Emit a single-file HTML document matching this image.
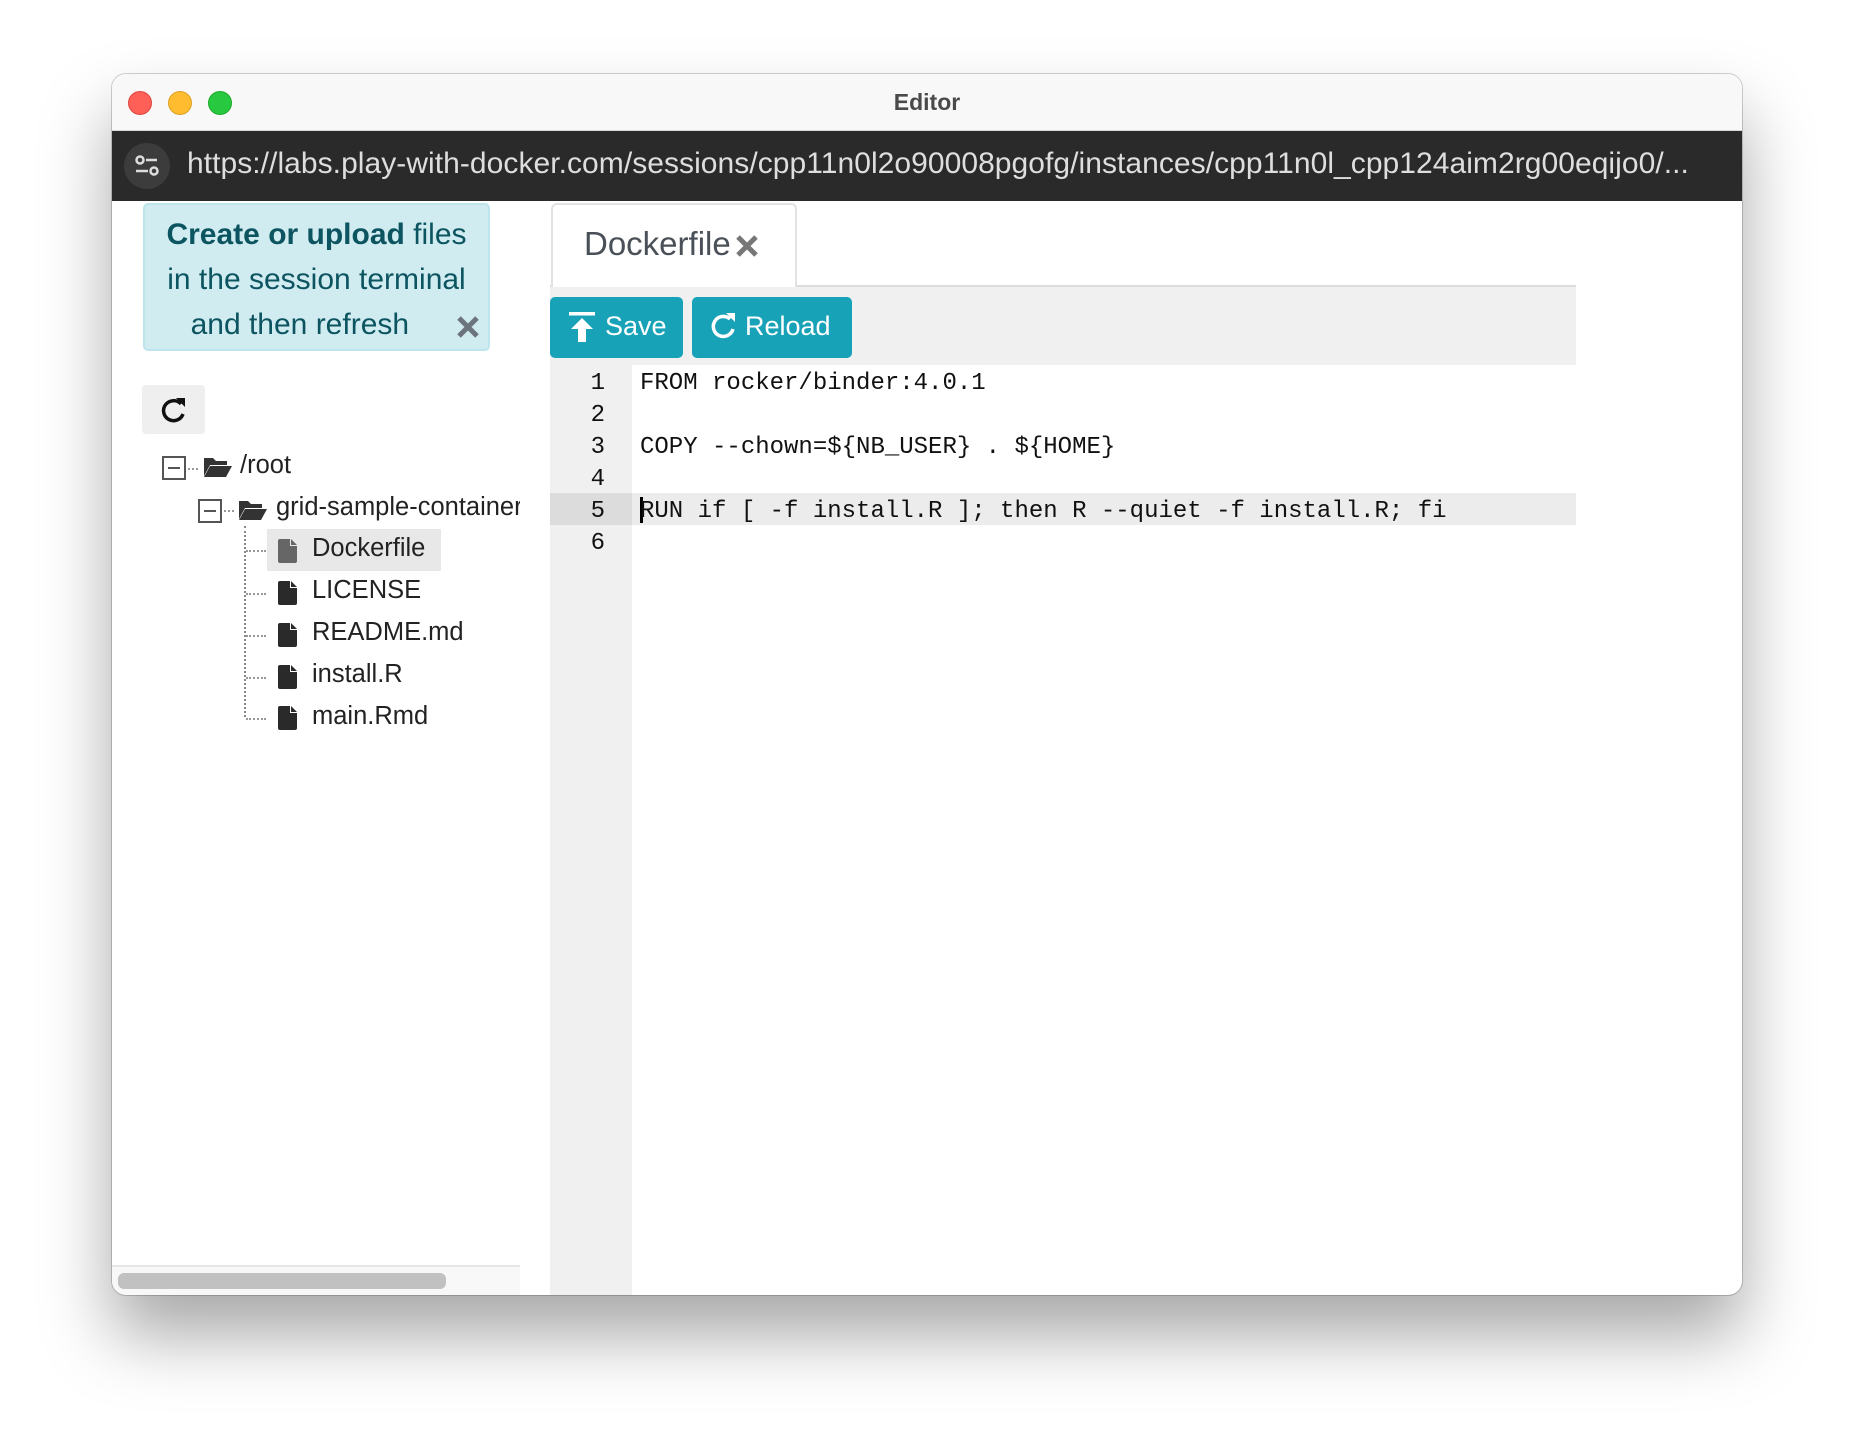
<!DOCTYPE html>
<html><head><meta charset="utf-8"><style>
*{box-sizing:border-box;margin:0;padding:0}
body{width:1854px;height:1444px;background:#fff;position:relative;overflow:hidden;font-family:"Liberation Sans",sans-serif}
.win{position:absolute;left:112px;top:74px;width:1630px;height:1221px;border-radius:14px;background:#fff;overflow:hidden;box-shadow:0 40px 70px rgba(0,0,0,.35),0 0 0 1px rgba(0,0,0,.18)}
.title{position:absolute;left:0;top:0;width:100%;height:57px;background:#f8f8f8;border-bottom:1px solid #d8d8d8}
.title .t{position:absolute;left:0;width:100%;top:15px;text-align:center;font-weight:bold;font-size:23px;color:#4a4a4a}
.dot{position:absolute;top:17px;width:24px;height:24px;border-radius:50%}
.addr{position:absolute;left:0;top:57px;width:100%;height:70px;background:#2a2a2a}
.addr .ic{position:absolute;left:12px;top:12px;width:46px;height:46px;border-radius:50%;background:#3c3c3c}
.addr .u{position:absolute;left:75px;top:16px;font-size:30px;color:#dedede;white-space:nowrap;letter-spacing:0.05px}
.abs{position:absolute}
.alert{left:31px;top:129px;width:347px;height:148px;background:#d1ecf1;border:2px solid #bee5eb;border-radius:5px;color:#0c5460;font-size:30px;line-height:45px;padding-top:7px;text-align:center;white-space:nowrap}
.tree{font-size:25.5px;color:#222}
.row{position:absolute;white-space:nowrap}
.mono{font-family:"Liberation Mono",monospace;font-size:24px;color:#111}
.btn{position:absolute;top:223px;height:61px;background:#17a2b8;border-radius:5px;color:#fff;font-size:27px}
</style></head><body>
<div class="win">
 <div class="title"><div class="t">Editor</div>
  <div class="dot" style="left:16px;background:#fe5f57;border:1px solid #e0443e"></div>
  <div class="dot" style="left:56px;background:#febc2e;border:1px solid #dea123"></div>
  <div class="dot" style="left:96px;background:#28c840;border:1px solid #1aab29"></div>
 </div>
 <div class="addr"><div class="ic"><svg width="46" height="46" viewBox="0 0 46 46"><circle cx="16" cy="17" r="3.5" fill="none" stroke="#ddd" stroke-width="2.5"/><line x1="22" y1="17" x2="33" y2="17" stroke="#ddd" stroke-width="2.5"/><line x1="12" y1="28" x2="24" y2="28" stroke="#ddd" stroke-width="2.5"/><circle cx="30" cy="28" r="3.5" fill="none" stroke="#ddd" stroke-width="2.5"/></svg></div>
  <div class="u">https://labs.play-with-docker.com/sessions/cpp11n0l2o90008pgofg/instances/cpp11n0l_cpp124aim2rg00eqijo0/...</div></div>

 <div class="abs alert"><b>Create or upload</b> files<br>in the session terminal<br>and then refresh&nbsp;&nbsp;&nbsp;&nbsp;
  <svg style="position:absolute;left:311px;top:110px" width="24" height="24" viewBox="0 0 24 24"><path d="M3 3L21 21M21 3L3 21" stroke="#6c757d" stroke-width="5"/></svg></div>

 <div class="abs" style="left:30px;top:311px;width:63px;height:49px;background:#efefef;border-radius:4px">
  <svg style="position:absolute;left:17px;top:10px" width="30" height="30" viewBox="0 0 30 30"><path d="M22 9A10 10 0 1 0 24 19" fill="none" stroke="#111" stroke-width="3.5"/><path d="M17 3L26 3L26 12Z" fill="#111"/></svg></div>

 <div class="tree">
  <div class="abs" style="left:50px;top:382px;width:24px;height:24px;border:2px solid #555;background:#fff"><div style="position:absolute;left:4px;top:9px;width:12px;height:2px;background:#555"></div></div>
  <div class="abs" style="left:76px;top:394px;width:10px;border-top:2px dotted #999"></div>
  <svg class="abs" style="left:91px;top:382px" width="30" height="22" viewBox="0 0 30 22"><path d="M1 2h9l3 3h11v4H7L1 20Z" fill="#333"/><path d="M7 10h22l-6 11H1Z" fill="#333"/></svg>
  <div class="row" style="left:128px;top:377px">/root</div>
  <div class="abs" style="left:86px;top:425px;width:24px;height:24px;border:2px solid #555;background:#fff"><div style="position:absolute;left:4px;top:9px;width:12px;height:2px;background:#555"></div></div>
  <div class="abs" style="left:112px;top:436px;width:10px;border-top:2px dotted #999"></div>
  <svg class="abs" style="left:126px;top:425px" width="30" height="22" viewBox="0 0 30 22"><path d="M1 2h9l3 3h11v4H7L1 20Z" fill="#333"/><path d="M7 10h22l-6 11H1Z" fill="#333"/></svg>
  <div class="row" style="left:164px;top:419px;width:244px;overflow:hidden">grid-sample-container</div>
  <div class="abs" style="left:132px;top:452px;height:191px;border-left:2px dotted #888"></div>
  <div class="abs" style="left:155px;top:455px;width:174px;height:42px;background:#e8e8e8"></div>
  <div class="abs" style="left:134px;top:476px;width:20px;border-top:2px dotted #999"></div>
  <div class="abs" style="left:134px;top:519px;width:20px;border-top:2px dotted #999"></div>
  <div class="abs" style="left:134px;top:561px;width:20px;border-top:2px dotted #999"></div>
  <div class="abs" style="left:134px;top:603px;width:20px;border-top:2px dotted #999"></div>
  <div class="abs" style="left:134px;top:644px;width:20px;border-top:2px dotted #999"></div>
  <svg class="abs" style="left:166px;top:465px" width="20" height="24" viewBox="0 0 20 24"><path d="M2 0h10v7h7v15a2 2 0 0 1-2 2H2a2 2 0 0 1-2-2V2a2 2 0 0 1 2-2ZM13 0l6 6h-6Z" fill="#666"/></svg>
  <svg class="abs" style="left:166px;top:507px" width="20" height="24" viewBox="0 0 20 24"><path d="M2 0h10v7h7v15a2 2 0 0 1-2 2H2a2 2 0 0 1-2-2V2a2 2 0 0 1 2-2ZM13 0l6 6h-6Z" fill="#2a2a2a"/></svg>
  <svg class="abs" style="left:166px;top:549px" width="20" height="24" viewBox="0 0 20 24"><path d="M2 0h10v7h7v15a2 2 0 0 1-2 2H2a2 2 0 0 1-2-2V2a2 2 0 0 1 2-2ZM13 0l6 6h-6Z" fill="#2a2a2a"/></svg>
  <svg class="abs" style="left:166px;top:591px" width="20" height="24" viewBox="0 0 20 24"><path d="M2 0h10v7h7v15a2 2 0 0 1-2 2H2a2 2 0 0 1-2-2V2a2 2 0 0 1 2-2ZM13 0l6 6h-6Z" fill="#2a2a2a"/></svg>
  <svg class="abs" style="left:166px;top:632px" width="20" height="24" viewBox="0 0 20 24"><path d="M2 0h10v7h7v15a2 2 0 0 1-2 2H2a2 2 0 0 1-2-2V2a2 2 0 0 1 2-2ZM13 0l6 6h-6Z" fill="#2a2a2a"/></svg>
  <div class="row" style="left:200px;top:460px">Dockerfile</div>
  <div class="row" style="left:200px;top:502px">LICENSE</div>
  <div class="row" style="left:200px;top:544px">README.md</div>
  <div class="row" style="left:200px;top:586px">install.R</div>
  <div class="row" style="left:200px;top:628px">main.Rmd</div>
 </div>
 <div class="abs" style="left:0;top:1191px;width:408px;height:30px;background:#f8f8f8;border-top:2px solid #e6e6e6"></div>
 <div class="abs" style="left:6px;top:1199px;width:328px;height:16px;background:#c1c1c1;border-radius:6px"></div>

 <div class="abs" style="left:438px;top:211px;width:1026px;height:2px;background:#ddd"></div>
 <div class="abs" style="left:439px;top:129px;width:246px;height:84px;background:#fff;border:2px solid #e2e2e2;border-bottom:none;border-radius:6px 6px 0 0"></div>
 <div class="abs" style="left:472px;top:150px;font-size:33px;color:#495057;line-height:40px">Dockerfile</div>
 <svg class="abs" style="left:623px;top:160px" width="24" height="24" viewBox="0 0 24 24"><path d="M3 3L21 21M21 3L3 21" stroke="#777" stroke-width="5"/></svg>
 <div class="abs" style="left:438px;top:213px;width:1026px;height:78px;background:#f0f0f0"></div>
 <div class="btn" style="left:438px;width:133px"><svg class="abs" style="left:18px;top:15px" width="28" height="30" viewBox="0 0 28 30"><rect x="1" y="0" width="26" height="3.5" fill="#fff"/><path d="M14 6L25 17H18V30H10V17H3Z" fill="#fff"/></svg><span class="abs" style="left:55px;top:14px">Save</span></div>
 <div class="btn" style="left:580px;width:160px"><svg class="abs" style="left:16px;top:14px" width="30" height="30" viewBox="0 0 30 30"><path d="M22 8A10 10 0 1 0 25 18" fill="none" stroke="#fff" stroke-width="3.5"/><path d="M18 2L27 2L27 11Z" fill="#fff"/></svg><span class="abs" style="left:53px;top:14px">Reload</span></div>

 <div class="abs" style="left:438px;top:291px;width:82px;height:930px;background:#f0f0f0"></div>
 <div class="abs" style="left:438px;top:419px;width:82px;height:32px;background:#dcdcdc"></div>
 <div class="abs" style="left:520px;top:419px;width:944px;height:32px;background:#ececec"></div>
 <div class="abs" style="left:528px;top:423px;width:3px;height:26px;background:#000"></div>
 <div class="abs mono" style="left:473px;top:294px;line-height:32px;text-align:right;width:20px">1<br>2<br>3<br>4<br>5<br>6</div>
 <div class="abs mono" style="left:528px;top:294px;line-height:32px;white-space:pre">FROM rocker/binder:4.0.1

COPY --chown=${NB_USER} . ${HOME}

RUN if [ -f install.R ]; then R --quiet -f install.R; fi
</div>
</div>
</body></html>
